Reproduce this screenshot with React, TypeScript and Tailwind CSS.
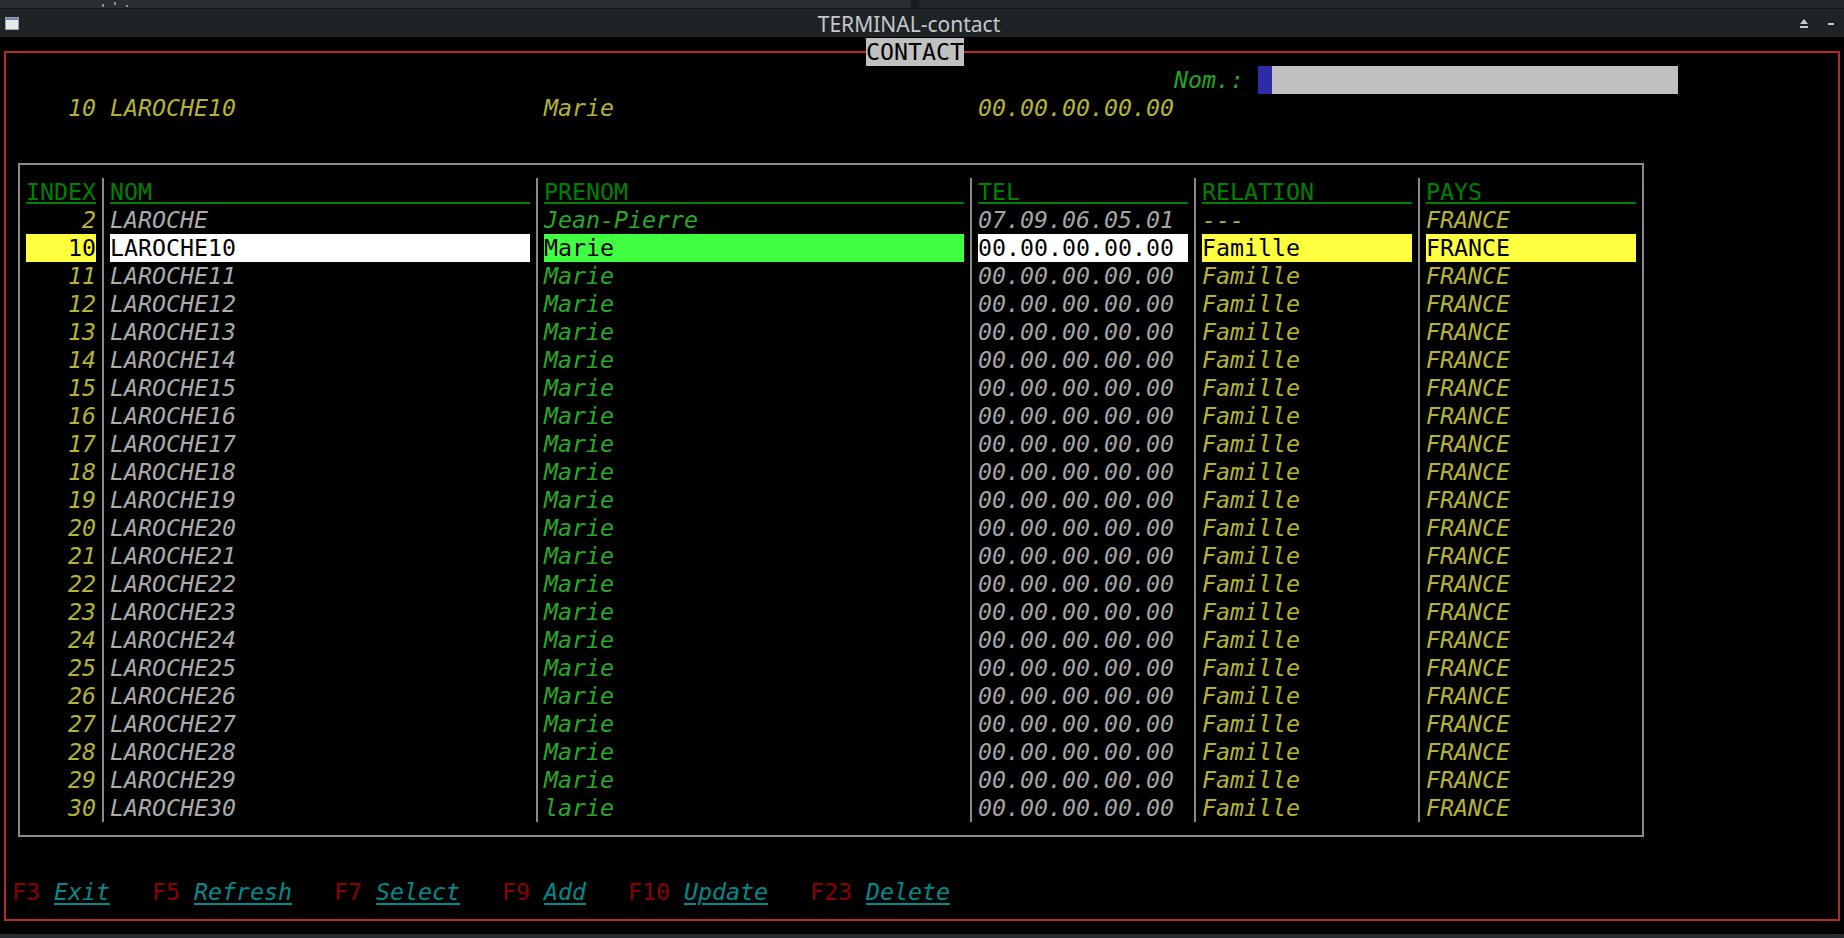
import clsx from "clsx";

type Row = {
  index: number;
  nom: string;
  prenom: string;
  tel: string;
  relation: string;
  pays: string;
};

const ROWS: Row[] = [
  { index: 2, nom: "LAROCHE", prenom: "Jean-Pierre", tel: "07.09.06.05.01", relation: "---", pays: "FRANCE" },
  ...Array.from({ length: 21 }, (_, k) => ({
    index: 10 + k,
    nom: `LAROCHE${10 + k}`,
    prenom: k === 20 ? "larie" : "Marie",
    tel: "00.00.00.00.00",
    relation: "Famille",
    pays: "FRANCE",
  })),
];

const SELECTED = 10;

const KEYS = [
  ["F3", "Exit"],
  ["F5", "Refresh"],
  ["F7", "Select"],
  ["F9", "Add"],
  ["F10", "Update"],
  ["F23", "Delete"],
];

function Sep() {
  return (
    <div className="flex w-[14px] shrink-0 justify-center">
      <div className="w-[2px] bg-[#8a8a8a]" />
    </div>
  );
}

function Head({ w, label }: { w: string; label: string }) {
  return (
    <div className={clsx("h-7 shrink-0", w)}>
      <div className="h-[26px] border-b-2 border-[#008000] text-[#008000]">{label}</div>
    </div>
  );
}

function DataRow({ row }: { row: Row }) {
  const sel = row.index === SELECTED;
  return (
    <div className="flex h-7">
      <div className={clsx("w-[70px] shrink-0 text-right", sel ? "bg-[#ffff40] text-black" : "italic text-[#b4b432]")}>
        {row.index}
      </div>
      <Sep />
      <div className={clsx("w-[420px] shrink-0", sel ? "bg-white text-black" : "italic text-[#ababab]")}>{row.nom}</div>
      <Sep />
      <div className={clsx("w-[420px] shrink-0", sel ? "bg-[#40ff40] text-black" : "italic text-[#28a828]")}>
        {row.prenom}
      </div>
      <Sep />
      <div className={clsx("w-[210px] shrink-0", sel ? "bg-white text-black" : "italic text-[#a4a4a4]")}>{row.tel}</div>
      <Sep />
      <div className={clsx("w-[210px] shrink-0", sel ? "bg-[#ffff40] text-black" : "italic text-[#b4b432]")}>
        {row.relation}
      </div>
      <Sep />
      <div className={clsx("w-[210px] shrink-0", sel ? "bg-[#ffff40] text-black" : "italic text-[#b4b432]")}>
        {row.pays}
      </div>
    </div>
  );
}

function TitleBar() {
  return (
    <div className="flex h-[37px] flex-col bg-[#1e2326]">
      {/* strip of the window behind */}
      <div className="flex h-[9px] border-b border-[#111416]">
        <div className="flex w-[911px] items-end gap-[10px] rounded-br-[4px] bg-[#2a2f32] pb-[1px] pl-[102px]">
          <div className="h-[3px] w-[2px] bg-[#8a9093]" />
          <div className="mb-[2px] h-[3px] w-[2px] bg-[#8a9093]" />
          <div className="h-[2px] w-[2px] bg-[#8a9093]" />
        </div>
        <div className="w-[8px] bg-[#1a1d1f]" />
        <div className="flex-1 bg-[#22272a]" />
      </div>
      <div className="flex flex-1 items-center px-[5px]">
        <svg width="14" height="13" viewBox="0 0 14 13" className="shrink-0">
          <rect x="0.5" y="0.5" width="13" height="12" fill="#e6e8ea" stroke="#9aa3aa" />
          <rect x="1" y="1" width="12" height="2" fill="#6a88b0" />
        </svg>
        <div className="flex-1 pt-[2px] text-center font-['Noto_Sans',sans-serif] text-[21px] leading-none text-[#c5c9cb]">
          TERMINAL-contact
        </div>
        <div className="flex items-center gap-[19px] pr-[5px]">
          <svg width="10" height="9" viewBox="0 0 10 9">
            <path d="M5 0 L9 5 L1 5 Z" fill="#c5c9cb" />
            <rect x="1" y="7" width="8" height="2" fill="#c5c9cb" />
          </svg>
          <svg width="6" height="9" viewBox="0 0 6 9">
            <rect x="0" y="4" width="6" height="2" fill="#c5c9cb" />
          </svg>
        </div>
      </div>
    </div>
  );
}

export default function App() {
  return (
    <div className="flex h-[938px] w-[1844px] flex-col overflow-hidden bg-black">
      <TitleBar />

      {/* terminal screen */}
      <div className="flex-1 pl-[4px] pr-[4px] pt-[14px] font-['DejaVu_Sans_Mono','Liberation_Mono',monospace] text-[23.25px] leading-7">
        <div className="relative h-[870px] border-2 border-[#b52a2a]">
          <div className="absolute left-[860px] top-[-15px] h-7 bg-[#c0c0c0] text-black">CONTACT</div>

          <div className="pt-[13px]">
            {/* Nom field */}
            <div className="ml-[1168px] flex h-7">
              <span className="w-[70px] italic text-[#22a622]">Nom.:</span>
              <span className="w-[14px]" />
              <div className="flex w-[420px]">
                <div className="w-[14px] bg-[#2c2ca8]" />
                <div className="flex-1 bg-[#c0c0c0]" />
              </div>
            </div>

            {/* current record */}
            <div className="ml-[20px] flex h-7 italic text-[#b4b432]">
              <div className="w-[70px] shrink-0 text-right">10</div>
              <div className="w-[14px] shrink-0" />
              <div className="w-[420px] shrink-0">LAROCHE10</div>
              <div className="w-[14px] shrink-0" />
              <div className="w-[420px] shrink-0">Marie</div>
              <div className="w-[14px] shrink-0" />
              <div className="w-[210px] shrink-0">00.00.00.00.00</div>
            </div>

            {/* list */}
            <div className="ml-[12px] mt-[41px] w-[1626px] border-2 border-[#8a8a8a] px-[6px] py-[13px]">
              <div className="flex h-7">
                <Head w="w-[70px]" label="INDEX" />
                <Sep />
                <Head w="w-[420px]" label="NOM" />
                <Sep />
                <Head w="w-[420px]" label="PRENOM" />
                <Sep />
                <Head w="w-[210px]" label="TEL" />
                <Sep />
                <Head w="w-[210px]" label="RELATION" />
                <Sep />
                <Head w="w-[210px]" label="PAYS" />
              </div>
              {ROWS.map((row) => (
                <DataRow key={row.index} row={row} />
              ))}
            </div>

            {/* function keys */}
            <div className="ml-[6px] mt-[41px] h-7 whitespace-pre">
              {KEYS.map(([k, label], i) => (
                <span key={k}>
                  {i > 0 && "   "}
                  <span className="text-[#8b0000]">{k}</span>{" "}
                  <span className="italic text-[#008b8b] underline decoration-2 underline-offset-[3px]">{label}</span>
                </span>
              ))}
            </div>
          </div>
        </div>
      </div>

      <div className="h-[4px] bg-[#262b2e]" />
    </div>
  );
}
